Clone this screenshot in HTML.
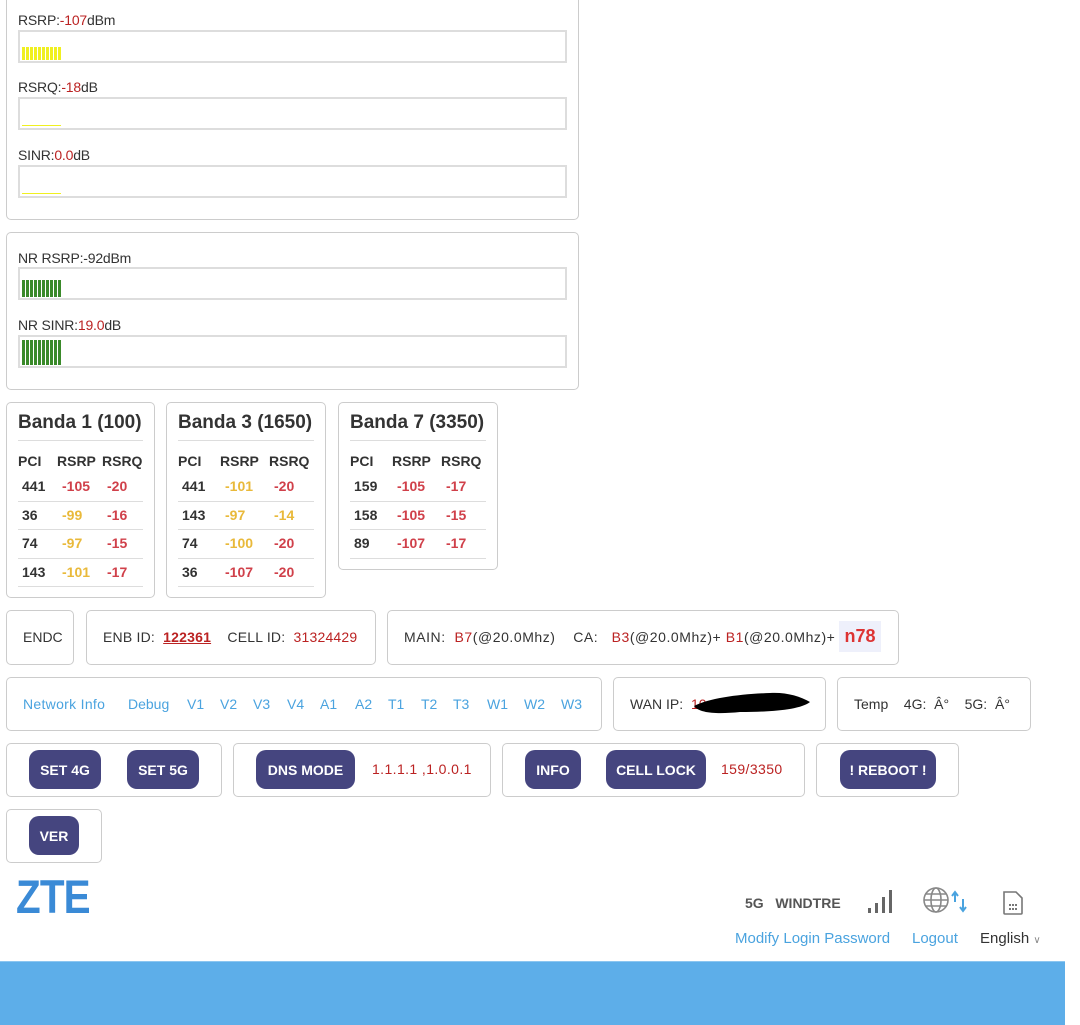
<!DOCTYPE html>
<html><head><meta charset="utf-8"><style>
*{margin:0;padding:0;box-sizing:border-box}
body{width:1080px;height:1025px;background:#fff;position:relative;overflow:hidden;font-family:"Liberation Sans",sans-serif;color:#333;font-size:14px}
.a{position:absolute}
.box{position:absolute;border:1px solid #ccc;border-radius:5px;background:#fff}
.bar{position:absolute;left:18px;width:549px;height:33px;border:2px solid #ddd;background:#fff}
.r{color:#b22}
.lbl{position:absolute;left:18px;font-size:14px;color:#333;white-space:nowrap;letter-spacing:-0.2px}
.yb{position:absolute;left:22px;width:39px;background:repeating-linear-gradient(90deg,#f0f020 0 3px,#fff 3px 4px)}
.gb{position:absolute;left:22px;width:39px;background:repeating-linear-gradient(90deg,#3a8a2a 0 3px,#fff 3px 4px)}
.band h3{position:absolute;left:11px;top:9px;font-size:19px;font-weight:bold;color:#333;white-space:nowrap}
.band .hl{position:absolute;left:11px;right:11px;height:1px;background:#ddd}
.band .t{position:absolute;font-size:14px;font-weight:bold;white-space:nowrap}
.y{color:#e9b93a}.rd{color:#d0404a}
.btn{position:absolute;height:39px;background:#45457f;color:#fff;font-weight:bold;font-size:14px;border-radius:10px;display:flex;align-items:center;justify-content:center;white-space:nowrap}
.bl{color:#4aa3df}
.nl{position:absolute;top:696px;color:#4aa3df;white-space:nowrap}
</style></head><body>

<div class="box" style="left:6px;top:-10px;width:573px;height:230px"></div>
<div class="lbl" style="top:12px">RSRP:<span class="r">-107</span>dBm</div>
<div class="bar" style="top:30px"></div>
<div class="yb" style="top:47px;height:13px"></div>
<div class="lbl" style="top:79px">RSRQ:<span class="r">-18</span>dB</div>
<div class="bar" style="top:97px"></div>
<div class="a" style="left:22px;top:125px;width:39px;height:1px;background:#f0f020"></div>
<div class="lbl" style="top:147px">SINR:<span class="r">0.0</span>dB</div>
<div class="bar" style="top:165px"></div>
<div class="a" style="left:22px;top:193px;width:39px;height:1px;background:#f0f020"></div>

<div class="box" style="left:6px;top:232px;width:573px;height:158px"></div>
<div class="lbl" style="top:250px">NR RSRP:-92dBm</div>
<div class="bar" style="top:267px"></div>
<div class="gb" style="top:280px;height:17px"></div>
<div class="lbl" style="top:317px">NR SINR:<span class="r">19.0</span>dB</div>
<div class="bar" style="top:335px"></div>
<div class="gb" style="top:340px;height:25px"></div>

<div class="box band" style="left:6px;top:402px;width:149px;height:196px">
<h3>Banda 1 (100)</h3><div class="hl" style="top:37px"></div>
<div class="t" style="left:11px;top:50px">PCI</div><div class="t" style="left:50px;top:50px">RSRP</div><div class="t" style="left:95px;top:50px">RSRQ</div>
<div class="t" style="left:15px;top:75px">441</div><div class="t rd" style="left:55px;top:75px">-105</div><div class="t rd" style="left:100px;top:75px">-20</div>
<div class="hl" style="top:98px"></div>
<div class="t" style="left:15px;top:104px">36</div><div class="t y" style="left:55px;top:104px">-99</div><div class="t rd" style="left:100px;top:104px">-16</div>
<div class="hl" style="top:126px"></div>
<div class="t" style="left:15px;top:132px">74</div><div class="t y" style="left:55px;top:132px">-97</div><div class="t rd" style="left:100px;top:132px">-15</div>
<div class="hl" style="top:155px"></div>
<div class="t" style="left:15px;top:161px">143</div><div class="t y" style="left:55px;top:161px">-101</div><div class="t rd" style="left:100px;top:161px">-17</div>
<div class="hl" style="top:183px"></div>
</div>

<div class="box band" style="left:166px;top:402px;width:160px;height:196px">
<h3>Banda 3 (1650)</h3><div class="hl" style="top:37px"></div>
<div class="t" style="left:11px;top:50px">PCI</div><div class="t" style="left:53px;top:50px">RSRP</div><div class="t" style="left:102px;top:50px">RSRQ</div>
<div class="t" style="left:15px;top:75px">441</div><div class="t y" style="left:58px;top:75px">-101</div><div class="t rd" style="left:107px;top:75px">-20</div>
<div class="hl" style="top:98px"></div>
<div class="t" style="left:15px;top:104px">143</div><div class="t y" style="left:58px;top:104px">-97</div><div class="t y" style="left:107px;top:104px">-14</div>
<div class="hl" style="top:126px"></div>
<div class="t" style="left:15px;top:132px">74</div><div class="t y" style="left:58px;top:132px">-100</div><div class="t rd" style="left:107px;top:132px">-20</div>
<div class="hl" style="top:155px"></div>
<div class="t" style="left:15px;top:161px">36</div><div class="t rd" style="left:58px;top:161px">-107</div><div class="t rd" style="left:107px;top:161px">-20</div>
<div class="hl" style="top:183px"></div>
</div>

<div class="box band" style="left:338px;top:402px;width:160px;height:168px">
<h3>Banda 7 (3350)</h3><div class="hl" style="top:37px"></div>
<div class="t" style="left:11px;top:50px">PCI</div><div class="t" style="left:53px;top:50px">RSRP</div><div class="t" style="left:102px;top:50px">RSRQ</div>
<div class="t" style="left:15px;top:75px">159</div><div class="t rd" style="left:58px;top:75px">-105</div><div class="t rd" style="left:107px;top:75px">-17</div>
<div class="hl" style="top:98px"></div>
<div class="t" style="left:15px;top:104px">158</div><div class="t rd" style="left:58px;top:104px">-105</div><div class="t rd" style="left:107px;top:104px">-15</div>
<div class="hl" style="top:126px"></div>
<div class="t" style="left:15px;top:132px">89</div><div class="t rd" style="left:58px;top:132px">-107</div><div class="t rd" style="left:107px;top:132px">-17</div>
<div class="hl" style="top:155px"></div>
</div>

<div class="box" style="left:6px;top:610px;width:68px;height:55px"></div>
<div class="a" style="left:23px;top:629px">ENDC</div>
<div class="box" style="left:86px;top:610px;width:290px;height:55px"></div>
<div class="a" style="left:103px;top:629px;white-space:nowrap;letter-spacing:0.2px">ENB ID: &nbsp;<span class="r" style="font-weight:bold;text-decoration:underline">122361</span> &nbsp;&nbsp;&nbsp;CELL ID: &nbsp;<span class="r">31324429</span></div>
<div class="box" style="left:387px;top:610px;width:512px;height:55px"></div>
<div class="a" style="left:404px;top:629px;white-space:nowrap;letter-spacing:0.55px">MAIN: &nbsp;<span class="r">B7</span>(@20.0Mhz) &nbsp;&nbsp;&nbsp;CA: &nbsp;&nbsp;<span class="r">B3</span>(@20.0Mhz)+ <span class="r">B1</span>(@20.0Mhz)+</div>
<div class="a" style="left:839px;top:621px;width:42px;height:31px;background:#eef0fb;color:#d33;font-weight:bold;font-size:18px;text-align:center;line-height:31px">n78</div>

<div class="box" style="left:6px;top:677px;width:596px;height:54px"></div>
<div class="nl" style="left:23px;letter-spacing:0.3px">Network Info</div>
<div class="nl" style="left:128px">Debug</div>
<div class="nl" style="left:187px">V1</div>
<div class="nl" style="left:220px">V2</div>
<div class="nl" style="left:253px">V3</div>
<div class="nl" style="left:287px">V4</div>
<div class="nl" style="left:320px">A1</div>
<div class="nl" style="left:355px">A2</div>
<div class="nl" style="left:388px">T1</div>
<div class="nl" style="left:421px">T2</div>
<div class="nl" style="left:453px">T3</div>
<div class="nl" style="left:487px">W1</div>
<div class="nl" style="left:524px">W2</div>
<div class="nl" style="left:561px">W3</div>
<div class="box" style="left:613px;top:677px;width:213px;height:54px"></div>
<div class="a" style="left:630px;top:696px;white-space:nowrap">WAN IP: &nbsp;<span class="r">10</span></div>
<svg class="a" style="left:690px;top:688px" width="124" height="30"><path d="M4 18 C20 10 50 6 80 5 C95 4 110 8 120 14 C110 22 80 24 50 24 C30 26 10 26 4 18Z" fill="#000"/></svg>
<div class="box" style="left:837px;top:677px;width:194px;height:54px"></div>
<div class="a" style="left:854px;top:696px;white-space:nowrap">Temp &nbsp;&nbsp;&nbsp;4G: &nbsp;Â° &nbsp;&nbsp;&nbsp;5G: &nbsp;Â°</div>

<div class="box" style="left:6px;top:743px;width:216px;height:54px"></div>
<div class="btn" style="left:29px;top:750px;width:72px">SET 4G</div>
<div class="btn" style="left:127px;top:750px;width:72px">SET 5G</div>
<div class="box" style="left:233px;top:743px;width:258px;height:54px"></div>
<div class="btn" style="left:256px;top:750px;width:99px">DNS MODE</div>
<div class="a r" style="left:372px;top:761px;letter-spacing:0.4px">1.1.1.1 ,1.0.0.1</div>
<div class="box" style="left:502px;top:743px;width:303px;height:54px"></div>
<div class="btn" style="left:525px;top:750px;width:56px">INFO</div>
<div class="btn" style="left:606px;top:750px;width:100px">CELL LOCK</div>
<div class="a r" style="left:721px;top:761px;letter-spacing:0.4px">159/3350</div>
<div class="box" style="left:816px;top:743px;width:143px;height:54px"></div>
<div class="btn" style="left:840px;top:750px;width:96px">! REBOOT !</div>

<div class="box" style="left:6px;top:809px;width:96px;height:54px"></div>
<div class="btn" style="left:29px;top:816px;width:50px">VER</div>

<div class="a" style="left:16px;top:869px;font-size:47px;font-weight:bold;color:#3a8ad6;letter-spacing:-1px;transform:scaleX(0.86);transform-origin:left">ZTE</div>

<div class="a" style="left:745px;top:895px;font-weight:bold;color:#555;font-size:14px;white-space:nowrap">5G &nbsp;&nbsp;WINDTRE</div>
<svg class="a" style="left:866px;top:887px" width="32" height="28"><g fill="#666"><rect x="2" y="21" width="3" height="5"/><rect x="9" y="16" width="3" height="10"/><rect x="16" y="10" width="3" height="16"/><rect x="23" y="3" width="3" height="23"/></g></svg>
<svg class="a" style="left:922px;top:886px" width="50" height="30"><g fill="none" stroke="#888" stroke-width="1.6"><circle cx="14" cy="14" r="12"/><ellipse cx="14" cy="14" rx="5" ry="12"/><line x1="2" y1="14" x2="26" y2="14"/><path d="M4 8 H24 M4 20 H24"/></g><path d="M33 16 V7 M30 10 L33 6 L36 10" stroke="#4aa3df" stroke-width="2" fill="none"/><path d="M41 13 V25 M38 21 L41 25 L44 21" stroke="#4aa3df" stroke-width="2" fill="none"/></svg>
<svg class="a" style="left:1001px;top:889px" width="24" height="28"><path d="M3 3 H15 L21 9 V24 a1 1 0 0 1 -1 1 H4 a1 1 0 0 1 -1 -1Z" fill="none" stroke="#777" stroke-width="1.6"/><g fill="#777"><rect x="8" y="15" width="2" height="2"/><rect x="11" y="15" width="2" height="2"/><rect x="14" y="15" width="2" height="2"/><rect x="8" y="19" width="2" height="2"/><rect x="11" y="19" width="2" height="2"/><rect x="14" y="19" width="2" height="2"/></g></svg>

<div class="a bl" style="left:735px;top:930px;font-size:15px;white-space:nowrap">Modify Login Password</div>
<div class="a bl" style="left:912px;top:930px;font-size:15px">Logout</div>
<div class="a" style="left:980px;top:930px;font-size:15px;color:#333;white-space:nowrap">English <span style="font-size:10px;color:#888">&#8744;</span></div>

<div class="a" style="left:0;top:961px;width:1065px;height:64px;background:#5daee9;border-top:1px solid #8cc6f0"></div>
</body></html>
